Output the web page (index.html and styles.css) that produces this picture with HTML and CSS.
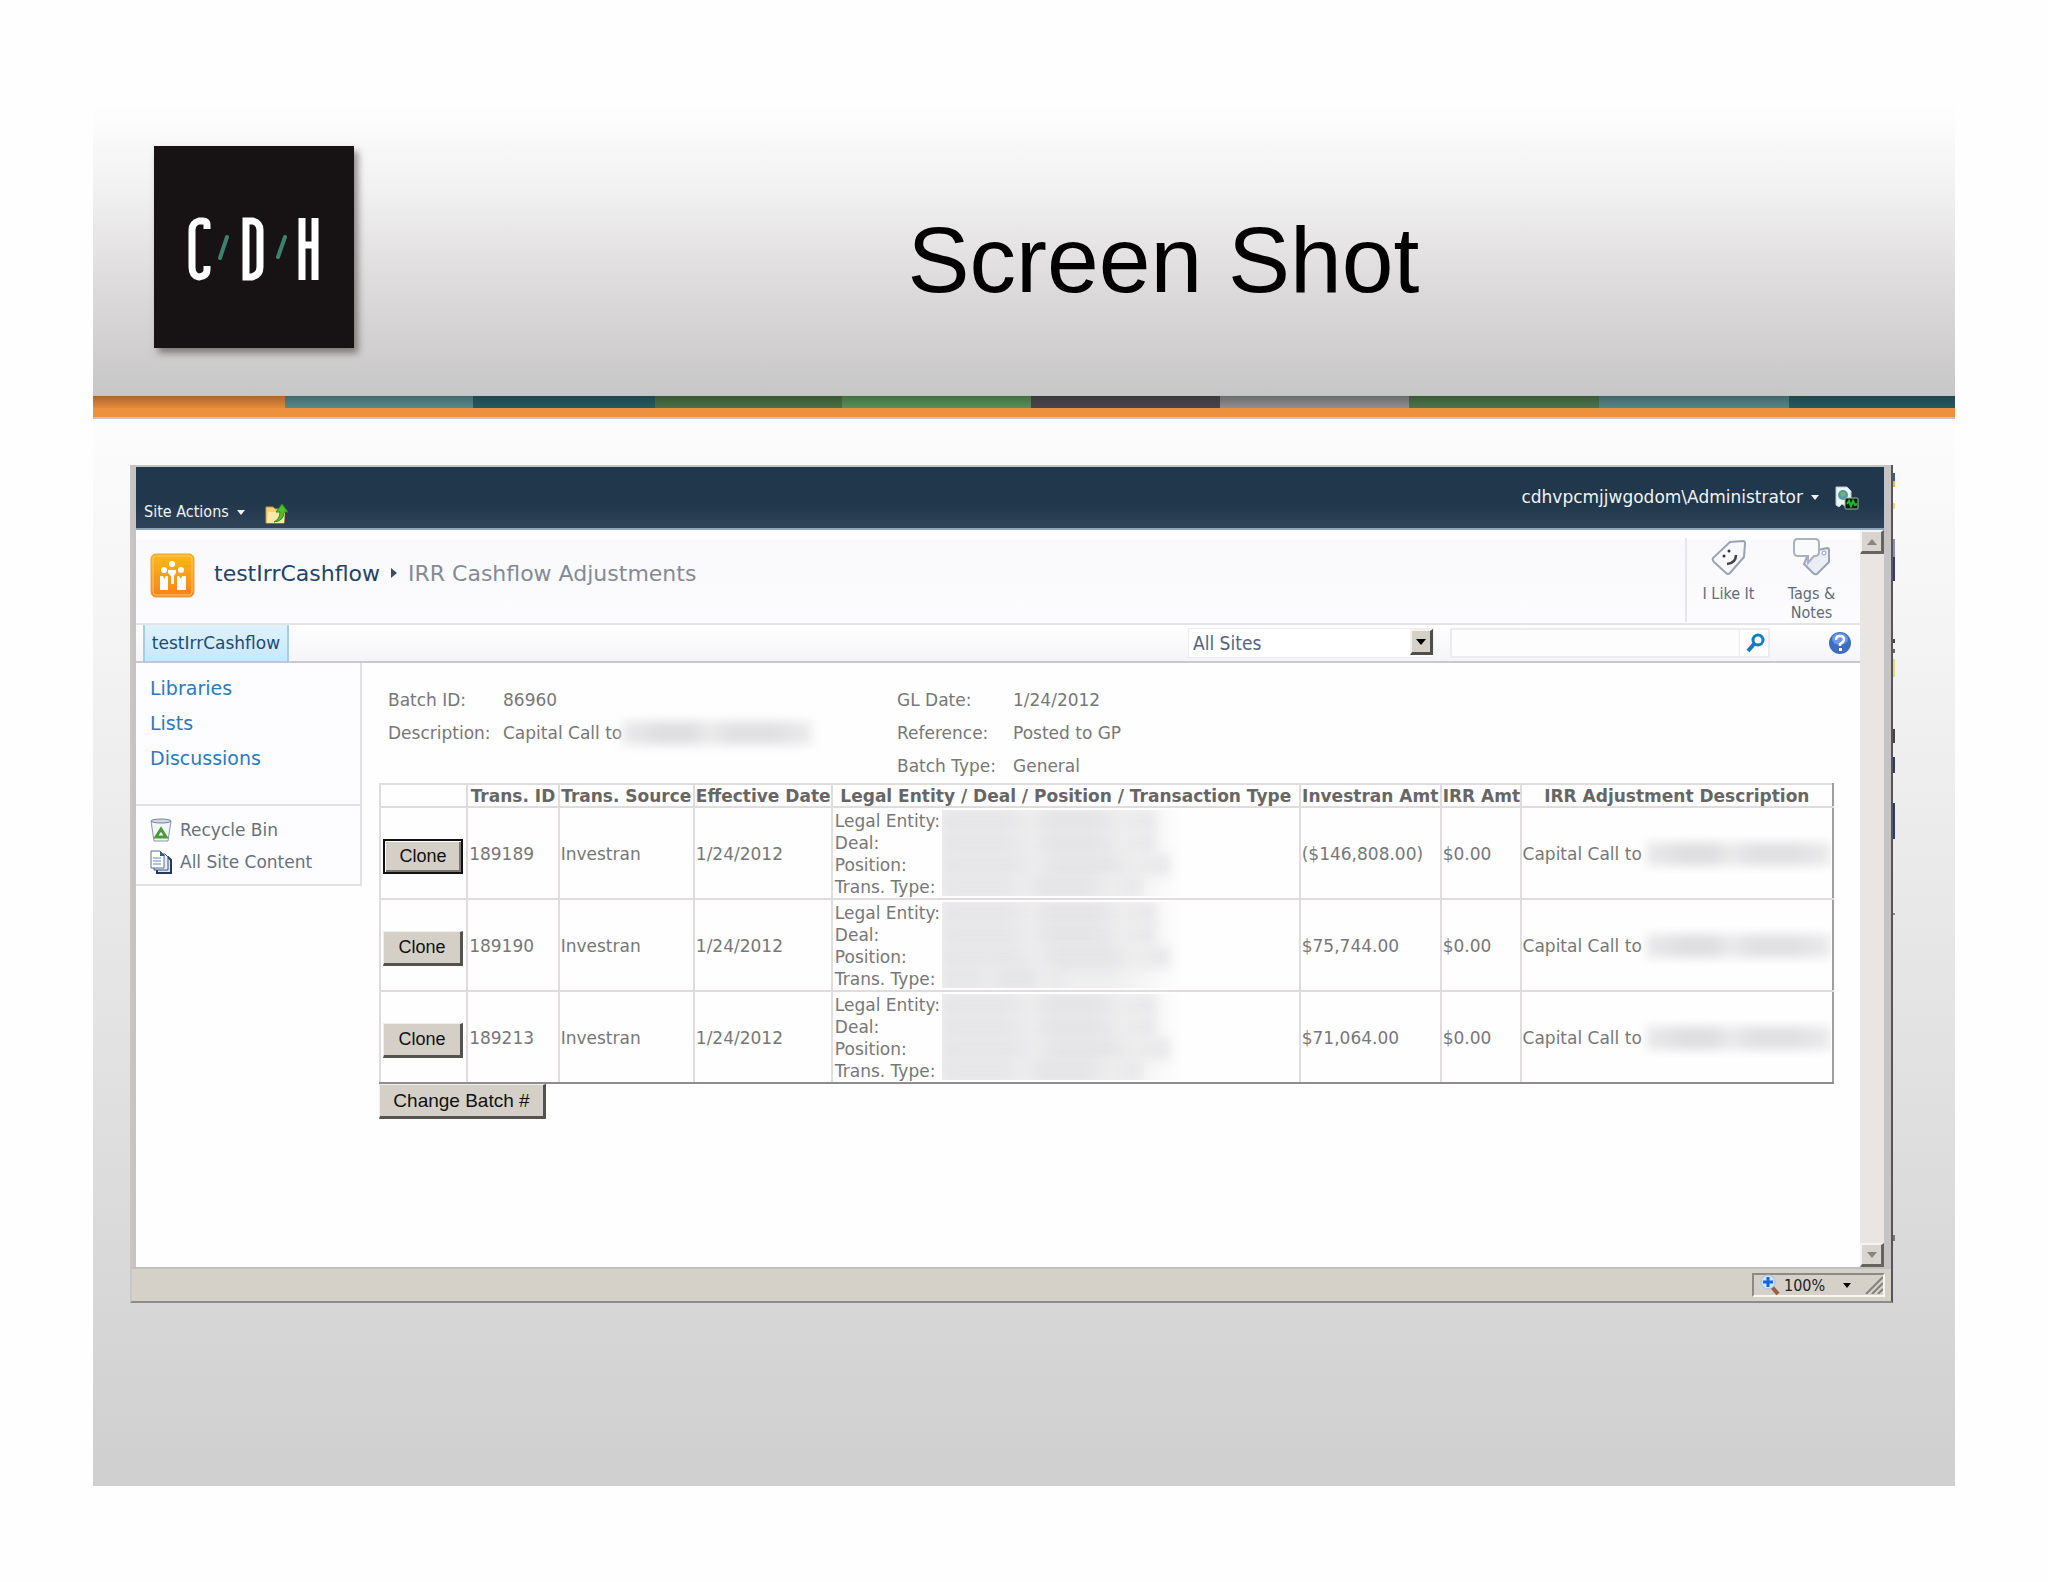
FILE: index.html
```html
<!DOCTYPE html>
<html lang="en">
<head>
<meta charset="utf-8">
<title>Screen Shot</title>
<link rel="stylesheet" href="styles.css">
</head>
<body>
<main class="slide">
  <header class="slide-head">
    <svg class="logo" viewBox="0 0 200 202" role="img" aria-label="C/D/H">
      <rect width="200" height="202" fill="#171314"/>
      <g fill="none" stroke="#fff" stroke-width="7">
        <path d="M53 83V79Q53 75 49 75H45Q38 77 38 84V121Q38 130 45 131Q53 130 53 124V120"/>
        <path d="M92 75V131H98Q106 129 106 121V84Q106 77 99 75Z"/>
        <path d="M148 72V134M161 72V134M148 99H161"/>
      </g>
      <path d="M73 91L66 112M131 91L124 111" stroke="#3f7f6c" stroke-width="4" stroke-linecap="round"/>
    </svg>
    <h1 class="slide-title">Screen Shot</h1>
  </header>
  <div class="stripe"></div>

  <section class="window">
    <div class="topbar">
      <div class="topbar-left">
        <button class="menu-btn cond">Site Actions <span class="caret"></span></button>
        <svg class="ico-folder" width="24" height="22" viewBox="0 0 24 22" aria-hidden="true">
          <path d="M1 4h7l2 2h9v14H1z" fill="#f3d27a" stroke="#c79a3c"/>
          <path d="M3 9h17l-1 11H2z" fill="#fbe8a8"/>
          <path d="M9 19q6-3 6-10h-4l6-8 6 8h-4q0 9-10 10z" fill="#4fc02c" stroke="#2b8a1c"/>
        </svg>
      </div>
      <div class="topbar-right">
        <button class="menu-btn">cdhvpcmjjwgodom\Administrator <span class="caret"></span></button>
        <svg width="24" height="24" viewBox="0 0 24 24" aria-hidden="true">
          <path d="M1 1h11l4 4v15l-3-2-3 2-3-2-3 3-3-2z" fill="#eef4f8" stroke="#b9c9d6"/>
          <circle cx="8" cy="9" r="5" fill="#4f9aa8"/><path d="M5 7q4-3 6 1l-4 4z" fill="#6cb56a"/>
          <rect x="10" y="12" width="13" height="11" rx="1" fill="#020" stroke="#9fb6a8"/>
          <path d="M12 18l2-3 2 5 2-5 2 4 2-1" fill="none" stroke="#1fbc2f" stroke-width="2"/>
        </svg>
      </div>
    </div>

    <div class="viewport">
      <div class="page">
        <div class="ribbon">
          <svg class="site-icon" width="46" height="46" viewBox="0 0 46 46" aria-hidden="true">
            <defs><linearGradient id="og" x1="0" y1="0" x2="0" y2="1"><stop offset="0" stop-color="#fdb913"/><stop offset="1" stop-color="#f58220"/></linearGradient></defs>
            <rect x="1" y="1" width="43" height="43" rx="5" fill="url(#og)" stroke="#e9a04a"/>
            <rect x="3" y="3" width="39" height="39" rx="3" fill="none" stroke="#ffc860"/>
            <g fill="#fff"><circle cx="22" cy="11" r="3"/><circle cx="14" cy="17" r="3"/><circle cx="31" cy="17" r="3"/>
            <path d="M18 17h8v3l-2 3v8h-3v-8l-3-3zM10 23h3l1 3 2-3h2v14h-8zM27 23h2l2 3 1-3h4v14h-9z"/></g>
          </svg>
          <nav class="crumbs"><a href="#">testIrrCashflow</a><span class="crumb-arrow"></span><span>IRR Cashflow Adjustments</span></nav>
          <div class="social">
            <button class="social-btn cond">
              <svg width="36" height="38" viewBox="0 0 36 38" aria-hidden="true">
                <path d="M19 4L32 3Q34 3 34 5L33 19L19 35Q17 37 15 35L3 24Q1 22 2 20Z" fill="#f7f8fb" stroke="#9aa3b5" stroke-width="2"/>
                <circle cx="13" cy="18" r="1.500" fill="#333"/><circle cx="18" cy="13" r="1.500" fill="#333"/>
                <path d="M16 26Q25 25 25 17" fill="none" stroke="#444" stroke-width="2.500"/>
              </svg>
              I Like It
            </button>
            <button class="social-btn cond">
              <svg width="38" height="38" viewBox="0 0 38 38" aria-hidden="true">
                <path d="M16 14L34 10Q36 10 36 12L36 24L24 36Q22 37 20 35L11 26Z" fill="#e9edf5" stroke="#9aa3b5" stroke-width="2"/>
                <circle cx="31" cy="15" r="2" fill="#fff" stroke="#8f99ad"/>
                <path d="M5 1H22Q26 1 26 5V14Q26 18 22 18H21L15 25V18H5Q1 18 1 14V5Q1 1 5 1Z" fill="#f9fafc" stroke="#a9b1c0" stroke-width="2"/>
              </svg>
              Tags &amp;<br>Notes
            </button>
          </div>
        </div>

        <div class="navbar">
          <a class="tab" href="#">testIrrCashflow</a>
          <form class="search">
            <div class="scope">
              <select class="cond" aria-label="Search scope"><option>All Sites</option></select>
              <span class="drop"></span>
            </div>
            <div class="query">
              <input type="text" aria-label="Search">
              <button type="button" aria-label="Go">
                <svg width="20" height="20" viewBox="0 0 20 20"><circle cx="12" cy="7" r="5" fill="none" stroke="#0f7dc2" stroke-width="3"/><path d="M8 11L2 18" stroke="#0f7dc2" stroke-width="4"/></svg>
              </button>
            </div>
            <button type="button" class="help" aria-label="Help">
              <svg width="22" height="24" viewBox="0 0 22 24"><ellipse cx="11" cy="12" rx="11" ry="11" fill="#3c6fc4"/><ellipse cx="11" cy="8" rx="8" ry="6" fill="#6c98df"/><path d="M7 9Q7 5 11 5Q15 5 15 8.500Q15 10.500 11 13V15" fill="none" stroke="#fff" stroke-width="2.500"/><rect x="10" y="17" width="3" height="3" fill="#fff"/></svg>
            </button>
          </form>
        </div>

        <div class="body">
          <aside class="side">
            <nav class="side-main"><a href="#">Libraries</a><a href="#">Lists</a><a href="#">Discussions</a></nav>
            <nav class="side-extra">
              <a href="#"><svg width="22" height="24" viewBox="0 0 22 24" aria-hidden="true"><path d="M1 3L4 23H18L21 3Z" fill="#f2f5f8" stroke="#8b97a6"/><ellipse cx="11" cy="3" rx="10" ry="2" fill="#cfd8e2" stroke="#77869a"/><path d="M11 11L16 19H6Z" fill="none" stroke="#4e9a3a" stroke-width="3"/></svg>Recycle Bin</a>
              <a href="#"><svg width="22" height="24" viewBox="0 0 22 24" aria-hidden="true"><path d="M7 7h11l3 3v13H7z" fill="#dfe7f2" stroke="#26385c" stroke-width="2"/><path d="M4 4h11l3 3v13H4z" fill="#e8eef7" stroke="#3d5584"/><path d="M1 1h9l4 4v13H1z" fill="#fff" stroke="#5a7096"/><path d="M3 8h8M3 11h8M3 14h8" stroke="#5c8ac4"/><path d="M10 1v5h5z" fill="#2a57a0"/></svg>All Site Content</a>
            </nav>
          </aside>

          <div class="content">
            <dl class="details">
              <dt>Batch ID:</dt><dd>86960</dd><dt>GL Date:</dt><dd>1/24/2012</dd>
              <dt>Description:</dt><dd>Capital Call to<span class="blur"></span></dd><dt>Reference:</dt><dd>Posted to GP</dd>
              <dt class="second">Batch Type:</dt><dd>General</dd>
            </dl>
            <table class="grid">
              <colgroup><col class="c-btn"><col class="c-id"><col class="c-src"><col class="c-date"><col class="c-ent"><col class="c-amt"><col class="c-irr"><col></colgroup>
              <thead><tr><th></th><th>Trans. ID</th><th>Trans. Source</th><th>Effective Date</th><th>Legal Entity / Deal / Position / Transaction Type</th><th>Investran Amt</th><th>IRR Amt</th><th>IRR Adjustment Description</th></tr></thead>
              <tbody>
                <tr><td><button class="classic clone default">Clone</button></td><td>189189</td><td>Investran</td><td>1/24/2012</td>
                  <td><div class="entity"><div>Legal Entity:<br>Deal:<br>Position:<br>Trans. Type:</div><div class="smudge"><i></i><i></i><i></i><i></i></div></div></td>
                  <td>($146,808.00)</td><td>$0.00</td><td><div class="adj">Capital Call to<span class="blur"></span></div></td></tr>
                <tr><td><button class="classic clone">Clone</button></td><td>189190</td><td>Investran</td><td>1/24/2012</td>
                  <td><div class="entity"><div>Legal Entity:<br>Deal:<br>Position:<br>Trans. Type:</div><div class="smudge short"><i></i><i></i><i></i><i></i></div></div></td>
                  <td>$75,744.00</td><td>$0.00</td><td><div class="adj">Capital Call to<span class="blur"></span></div></td></tr>
                <tr><td><button class="classic clone">Clone</button></td><td>189213</td><td>Investran</td><td>1/24/2012</td>
                  <td><div class="entity"><div>Legal Entity:<br>Deal:<br>Position:<br>Trans. Type:</div><div class="smudge"><i></i><i></i><i></i><i></i></div></div></td>
                  <td>$71,064.00</td><td>$0.00</td><td><div class="adj">Capital Call to<span class="blur"></span></div></td></tr>
              </tbody>
            </table>
            <button class="classic change">Change Batch #</button>
          </div>
        </div>
      </div>
      <div class="scrollbar"><span class="sb up"></span><span class="sb down"></span></div>
    </div>

    <footer class="status">
      <div class="zoom cond">
        <svg width="20" height="22" viewBox="0 0 20 22" aria-hidden="true"><path d="M12 13L18 20" stroke="#9a5f3c" stroke-width="4"/><circle cx="8" cy="8" r="7" fill="#cfe6fa" stroke="#9cc3e6"/><path d="M8 3V13M3 8H13" stroke="#1565d8" stroke-width="3"/></svg>
        <span>100%</span><span class="caret dark"></span>
        <svg class="grip" width="18" height="18" viewBox="0 0 18 18" aria-hidden="true"><path d="M1 18L18 1M7 18L18 7M13 18L18 13" stroke="#85817b" stroke-width="2"/></svg>
      </div>
    </footer>
  </section>
</main>
</body>
</html>
```
FILE: styles.css
```css
* { box-sizing: border-box; }
body { margin: 0; padding: 104px 93px 96px; background: #fefefe; font-family: "DejaVu Sans", Verdana, sans-serif; font-size: 17px; color: #777; }
a { text-decoration: none; color: inherit; }
button, input, select { font: inherit; color: inherit; margin: 0; padding: 0; border: 0; background: none; border-radius: 0; }
svg { display: block; flex: none; }
.cond, button.cond, select.cond { font-family: "DejaVu Sans Condensed", Tahoma, sans-serif; font-size: 16px; }

/* Slide frame */
.slide { background: linear-gradient(#fcfcfc 315px, #f6f6f6 480px, #d0cfd0); padding-bottom: 183px; }
.slide-head { display: flex; align-items: flex-start; height: 291px; padding: 42px 0 0 61px; background: linear-gradient(#fefefe, #f3f2f3 28%, #dddbdc 62%, #c8c7c7); }
.logo { width: 200px; height: 202px; box-shadow: 4px 5px 7px rgba(60, 50, 50, .55); }
.slide-title { flex: 1; margin: 0 182px; padding: 60px 0 0 18px; font: 400 93px/108px "Liberation Sans", Arial, sans-serif; text-align: center; color: #000; }
.stripe { height: 24px; border-top: 1px solid #b7c9c2; border-bottom: 2px solid #cdc0c8;
  background: linear-gradient(rgba(30, 20, 20, .3), rgba(0, 0, 0, 0)) 0 0 / 100% 12px no-repeat,
    linear-gradient(90deg, #e58a3b 0 10.3%, #558b8d 0 20.4%, #235b62 0 30.2%, #497245 0 40.2%, #589257 0 50.4%, #4a474d 0 60.5%, #908f91 0 70.7%, #4b764a 0 80.9%, #55878b 0 91.1%, #235b62 0) 0 0 / 100% 12px no-repeat, #ee913f; }

/* Browser window */
.window { position: relative; margin: 46px 62px 0 37px; padding-top: 2px; border: solid #c9c7c5; border-width: 0 2px 2px; border-right-color: #55545a; border-bottom-color: #8e8c8a; background: #c6c4c2; }
.window::after { content: ""; position: absolute; top: 8px; right: -4px; width: 2px; height: 770px;
  background: linear-gradient(#3a5b9a 0 8px, #e9b45a 0 14px, transparent 0 30px, #e2d98a 0 36px, transparent 0 66px, #8d8dbb 0 84px, #3b3584 0 108px, transparent 0 166px, #444 0 170px, transparent 0 176px, #666 0 180px, transparent 0 186px, #e2d98a 0 204px, transparent 0 256px, #444 0 270px, transparent 0 284px, #2c3b6a 0 300px, transparent 0 330px, #2c3b6a 0 366px, transparent 0 440px, #888 0 442px, transparent 0 762px, #777 0 768px, transparent 0); }
.topbar { display: flex; justify-content: space-between; height: 63px; margin: 0 7px 0 4px; padding: 0 1px 0 8px; color: #f0f3f6; background: linear-gradient(#21374c 60%, #304459); border-bottom: 2px solid #8ea6b8; }
.topbar-left { display: flex; align-items: flex-start; gap: 20px; padding-top: 34px; }
.topbar-right { display: flex; align-items: flex-start; gap: 16px; padding: 19px 24px 0 0; font-size: 17px; }
.ico-folder { margin-top: 2px; }
.menu-btn { display: flex; align-items: center; gap: 8px; line-height: 22px; white-space: nowrap; }
.caret { border: solid transparent; border-width: 5px 4px 0; border-top-color: currentColor; }
.caret.dark { border-top-color: #000; }

.viewport { display: flex; margin: 0 7px 0 4px; background: #fefefe; }
.page { flex: 1; min-width: 0; display: flex; flex-direction: column; min-height: 737px; }
.ribbon { display: flex; height: 95px; padding: 8px 7px 0 14px; background: linear-gradient(#fff 9px, #f9f9fb 10px, #fcfcfe); border-bottom: 2px solid #e4e4e8; }
.site-icon { margin-top: 15px; }
.crumbs { flex: 1; display: flex; align-items: center; gap: 11px; height: 70px; padding-left: 18px; font-size: 22px; color: #848b95; white-space: nowrap; }
.crumbs a { color: #1f4468; }
.crumb-arrow { border: solid transparent; border-width: 5px 0 5px 6px; border-left-color: #3a4d66; }
.social { display: flex; border-left: 2px solid #e6e6ea; height: 84px; }
.social-btn { display: flex; flex-direction: column; align-items: center; width: 83px; line-height: 19px; color: #5f6b7d; }
.social-btn svg { margin-bottom: 8px; }

.navbar { display: flex; justify-content: space-between; height: 38px; background: linear-gradient(#fefefe, #f5f5f8); border-bottom: 2px solid #c9c9cd; }
.tab { height: 37px; margin-left: 7px; width: 146px; text-align: center; line-height: 36px; color: #1f4a6e; border: solid #a3cfe4; border-width: 0 2px 1px; background: linear-gradient(#dff2fe, #c6e7fd); }
.search { display: flex; align-items: center; padding-right: 9px; }
.scope { display: flex; position: relative; width: 246px; height: 30px; margin-right: 16px; background: #fff; border: 1px solid #eeeef2; }
.scope select { appearance: none; flex: 1; padding-left: 4px; font-size: 19px; color: #55657f; }
.drop { position: absolute; top: 0; right: 0; width: 23px; height: 26px; background: #d4d0c8; border: solid #f4f2ee; border-width: 2px 3px 3px 2px; border-right-color: #504e4a; border-bottom-color: #504e4a; pointer-events: none; }
.drop::after { content: ""; position: absolute; top: 8px; left: 4px; border: solid transparent; border-width: 6px 5px 0; border-top-color: #000; }
.query { display: flex; width: 320px; height: 30px; margin-right: 59px; border: 2px solid #ececf0; background: #fdfdfe; }
.query input { flex: 1; min-width: 0; padding: 0 6px; }
.query button { width: 29px; padding-left: 6px; border-left: 1px solid #ececf0; background: #fff; }

.body { display: flex; flex: 1; }
.side { width: 226px; flex: none; align-self: flex-start; border: solid #e2e0e4; border-width: 0 2px 2px 0; background: #fdfdff; }
.side a { display: flex; align-items: center; }
.side-main { padding: 8px 14px 28px; font-size: 19px; line-height: 35px; color: #2a7ac0; border-bottom: 2px solid #e2e0e4; }
.side-extra { padding: 8px 14px 6px; line-height: 32px; color: #66707e; }
.side-extra a { gap: 8px; }
.content { flex: 1; min-width: 0; padding: 20px 26px 0 17px; }
.details { display: grid; grid-template-columns: 115px 394px 116px 1fr; grid-auto-rows: 33px; align-items: center; margin: 0 0 1px; padding-left: 9px; white-space: nowrap; }
.details dt, .details dd { margin: 0; display: flex; align-items: center; }
.details .second { grid-column: 3; }
/* Redacted text */
.blur { flex: none; width: 190px; height: 24px; filter: blur(5px); background: linear-gradient(90deg, #ebebec, #dfdfe1 20% 36%, #ebebec 46%, #e1e1e3 58% 80%, #ececed); }

/* Transactions */
.grid { width: 100%; table-layout: fixed; border-collapse: collapse; border: 2px solid #dedadb; border-right-color: #a09da1; border-bottom-color: #8f8d91; }
.grid th, .grid td { padding: 1px 1px 0; border: 2px solid #e0dcdd; white-space: nowrap; text-align: left; line-height: 20px; }
.grid td { padding-top: 2px; }
.grid th { text-align: center; font-weight: 700; color: #666; }
.grid tr > :last-child { border-right-color: #a09da1; }
.grid tbody tr:last-child td { border-bottom-color: #8f8d91; }
.c-btn { width: 6%; } .c-id { width: 6.3%; } .c-src { width: 9.3%; } .c-date { width: 9.5%; } .c-ent { width: 32.2%; } .c-amt { width: 9.7%; } .c-irr { width: 5.5%; }
.entity { display: flex; gap: 2px; padding-left: 1px; line-height: 22px; }
.smudge { display: flex; flex-direction: column; width: 240px; height: 86px; overflow: hidden; background: linear-gradient(90deg, #efeff0 70%, #fefefe); }
.smudge i { flex: none; height: 22px; width: 214px; filter: blur(6px); background: linear-gradient(90deg, #e6e6e8 30%, #ececed 42%, #e4e4e6 50% 72%, #ededee 84%, #e6e6e8); }
.smudge i:nth-child(3) { width: 228px; }
.smudge i:nth-child(4) { width: 200px; }
.smudge.short i:nth-child(4) { width: 120px; }
.adj { display: flex; align-items: center; overflow: hidden; height: 38px; }
.adj .blur { flex: 1; margin-left: 4px; }

.classic { display: block; font-family: "Liberation Sans", Arial, sans-serif; color: #111; background: #d4d0c8; border: solid #f1efec; border-width: 1px 3px 3px 1px; border-right-color: #55534f; border-bottom-color: #55534f; }
.clone { width: 80px; height: 35px; margin: 4px 0 0 1px; font-size: 18px; }
.clone.default { border: 2px solid #111; box-shadow: inset 1px 1px 0 #fff, inset -2px -2px 0 #77746f; }
.change { width: 167px; height: 35px; font-size: 19px; }

.scrollbar { display: flex; flex-direction: column; justify-content: space-between; width: 24px; background: #e8e5e2; }
.sb { display: flex; justify-content: center; align-items: center; height: 24px; background: #d8d5d0; border: solid #f6f4f2; border-width: 2px 3px 3px 2px; border-right-color: #66645f; border-bottom-color: #66645f; }
.sb::after { content: ""; border: solid transparent; border-width: 6px 5px 0; border-top-color: #88857f; }
.sb.up::after { border-width: 0 5px 6px; border-bottom-color: #88857f; }
.status { display: flex; justify-content: flex-end; height: 34px; padding: 4px 6px 4px 0; border-top: 2px solid #c2bfbc; background: #d5d1c9; }
.zoom { display: flex; align-items: center; width: 133px; padding-left: 6px; gap: 4px; color: #222; border: 2px solid; border-color: #8d8983 #f8f6f2 #f8f6f2 #8d8983; }
.zoom .caret { margin-left: 14px; }
.grip { margin-left: auto; }
```
